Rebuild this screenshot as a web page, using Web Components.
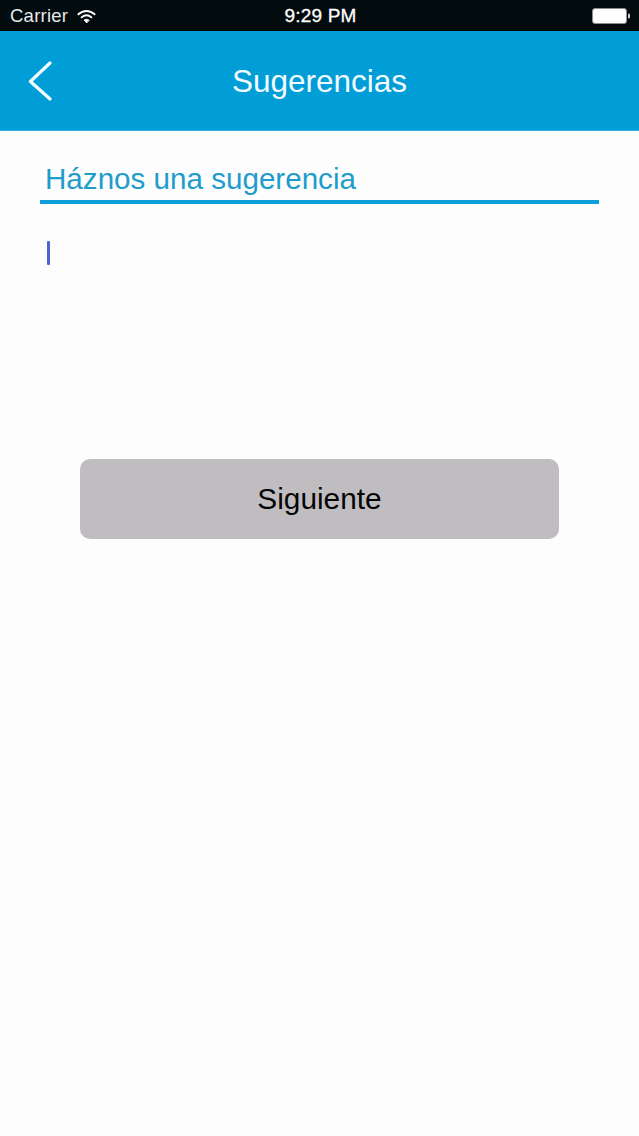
<!DOCTYPE html>
<html lang="es">
<head>
<meta charset="utf-8">
<title>Sugerencias</title>
<style>
  html, body { margin: 0; padding: 0; background: #fdfdfd; }
  body { font-family: "Liberation Sans", Arial, sans-serif; width: 639px; height: 1136px; overflow: hidden; }
</style>
</head>
<body>
<x-app>
  <x-status-bar carrier="Carrier" time="9:29 PM"></x-status-bar>
  <x-nav-bar title="Sugerencias"></x-nav-bar>
  <x-suggestion-form heading="Háznos una sugerencia">
    <x-next-button>Siguiente</x-next-button>
  </x-suggestion-form>
</x-app>

<script>
class AppElement extends HTMLElement {
  constructor() {
    super();
    this.attachShadow({ mode: 'open' });
    this.shadowRoot.innerHTML = `
      <style>
        :host { display: flex; flex-direction: column; height: 1136px; background: #fdfdfd; }
      </style>
      <slot></slot>
    `;
  }
}

class StatusBarElement extends HTMLElement {
  constructor() {
    super();
    this.attachShadow({ mode: 'open' });
  }

  connectedCallback() {
    const carrier = this.getAttribute('carrier') || '';
    const time    = this.getAttribute('time') || '';
    this.shadowRoot.innerHTML = `
      <style>
        :host {
          display: grid;
          grid-template-columns: 1fr auto 1fr;
          align-items: center;
          height: 31px;
          box-sizing: border-box;
          padding: 1px 8px 0 10px;
          background: #020b0e;
          color: #fff;
          font: 18.5px "Liberation Sans", Arial, sans-serif;
        }
        .left { display: flex; align-items: center; gap: 9px; color: #e6e9e9; letter-spacing: .25px; }
        .time { font-size: 19px; -webkit-text-stroke: .3px #fff; letter-spacing: .2px; }
        .right { display: flex; justify-content: flex-end; align-items: center; }
        svg { display: block; }
      </style>
      <div class="left">
        <span>${carrier}</span>
        <svg width="19" height="15" viewBox="0 0 20 15" fill="none" stroke="#fff" stroke-linecap="round">
          <path d="M1.5 5.2C6.6 .6 13.4 .6 18.5 5.2" stroke-width="2"/>
          <path d="M4.8 8.4C8 5.6 12 5.6 15.2 8.4" stroke-width="2"/>
          <path d="M10 14 7.5 11.3C9 10.1 11 10.1 12.5 11.3Z" fill="#fff" stroke-width="1"/>
        </svg>
      </div>
      <span class="time">${time}</span>
      <div class="right">
        <svg width="39" height="16" viewBox="0 0 39 16">
          <rect x=".5" y=".5" width="34" height="15" rx="2.5" fill="#fff" stroke="#8a8d8e"/>
          <rect x="36" y="5.5" width="2" height="5" rx="1" fill="#c9cbcc"/>
        </svg>
      </div>
    `;
  }
}

class NavBarElement extends HTMLElement {
  constructor() {
    super();
    this.attachShadow({ mode: 'open' });
  }

  connectedCallback() {
    this.shadowRoot.innerHTML = `
      <style>
        :host {
          display: grid;
          grid-template-columns: 1fr auto 1fr;
          align-items: center;
          height: 100px;
          box-sizing: border-box;
          padding: 0 28px;
          background: #019dd6;
          border-bottom: 1px solid #35b0dc;
          color: #f2fbff;
          font: 31.5px "Liberation Sans", Arial, sans-serif;
        }
        svg { display: block; }
        .title { padding-top: 2px; }
      </style>
      <svg width="24" height="40" viewBox="0 0 24 40" fill="none" stroke="#f2fbff" stroke-width="3.2" stroke-linecap="round" stroke-linejoin="round">
        <path d="M22 2 2.4 20.5 22 38"/>
      </svg>
      <span class="title">${this.getAttribute('title') || ''}</span>
      <span></span>
    `;
  }
}

class SuggestionFormElement extends HTMLElement {
  constructor() {
    super();
    this.attachShadow({ mode: 'open' });
  }

  connectedCallback() {
    this.shadowRoot.innerHTML = `
      <style>
        :host { display: flex; flex-direction: column; padding: 31px 40px 0; }
        .heading {
          padding: 0 0 4px 5px;
          border-bottom: 4px solid #0f9fd8;
          color: #1e9ccc;
          font-size: 29.6px;
          line-height: 34px;
        }
        .caret {
          width: 3px;
          height: 24px;
          margin: 37px 0 0 6.5px;
          border-radius: 1px;
          background: #4e64cf;
        }
        .actions { display: flex; justify-content: center; margin-top: 194px; }
      </style>
      <div class="heading">${this.getAttribute('heading') || ''}</div>
      <div class="caret"></div>
      <div class="actions"><slot></slot></div>
    `;
  }
}

class NextButtonElement extends HTMLElement {
  constructor() {
    super();
    this.attachShadow({ mode: 'open' });
    this.shadowRoot.innerHTML = `
      <style>
        :host {
          display: flex;
          align-items: center;
          justify-content: center;
          width: 479px;
          height: 80px;
          border-radius: 10px;
          background: #c0bdc0;
          color: #050505;
          font: 29.8px "Liberation Sans", Arial, sans-serif;
        }
      </style>
      <slot></slot>
    `;
  }
}

customElements.define('x-app', AppElement);
customElements.define('x-status-bar', StatusBarElement);
customElements.define('x-nav-bar', NavBarElement);
customElements.define('x-suggestion-form', SuggestionFormElement);
customElements.define('x-next-button', NextButtonElement);
</script>
</body>
</html>
